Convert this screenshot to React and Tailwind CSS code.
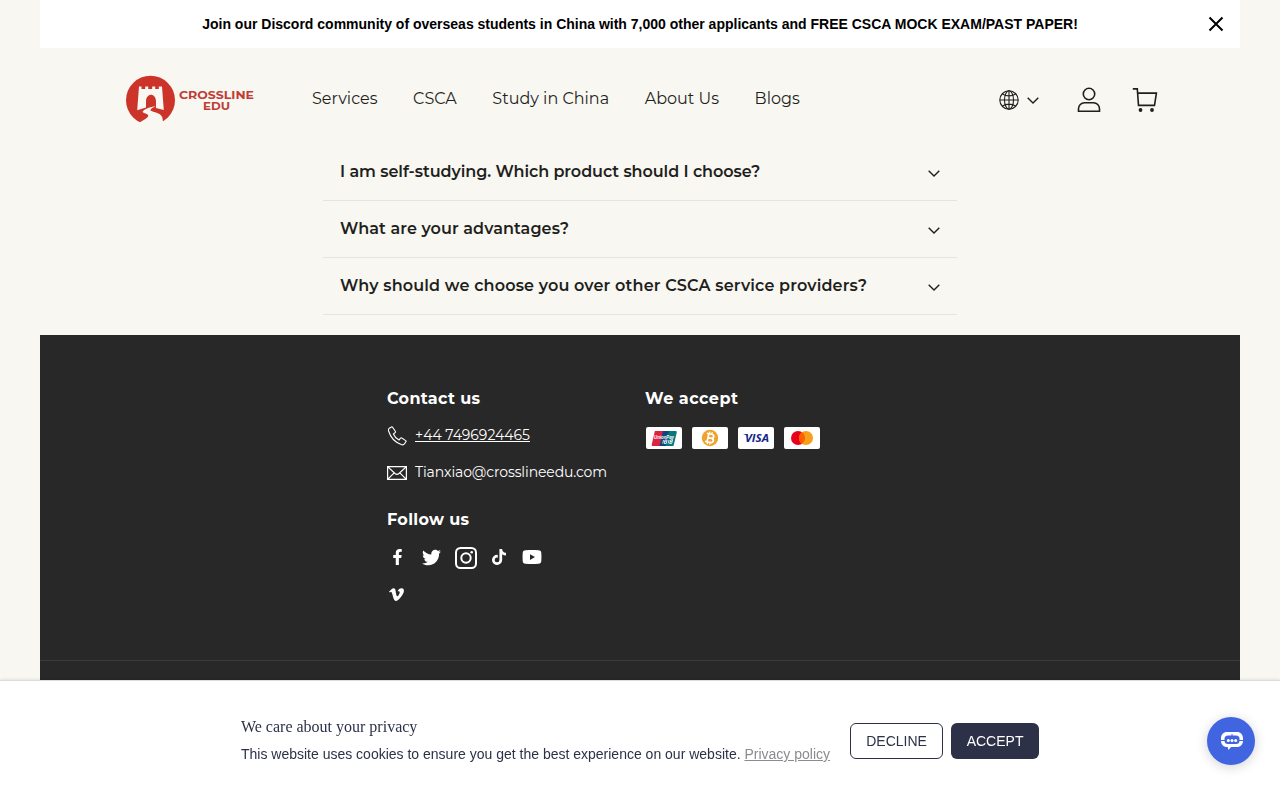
import { FaFacebookF, FaTwitter, FaTiktok, FaVimeoV } from 'react-icons/fa'

const navLinks = ['Services', 'CSCA', 'Study in China', 'About Us', 'Blogs']

const faqs = [
  { question: 'I am self-studying. Which product should I choose?', tracking: 'tracking-[-0.05px]' },
  { question: 'What are your advantages?', tracking: 'tracking-[0.09px]' },
  { question: 'Why should we choose you over other CSCA service providers?', tracking: 'tracking-[0.165px]' },
]

function Chevron({ className }) {
  return (
    <svg viewBox="0 0 12 7" className={className} fill="none" stroke="currentColor" strokeWidth="1.4">
      <path d="M.7.7 6 6 11.3.7" />
    </svg>
  )
}

function Logo() {
  return (
    <svg viewBox="0 0 130 50" className="mt-2 h-[50px] w-[130px]">
      <defs>
        <clipPath id="disc">
          <circle cx="25.5" cy="25.2" r="24.5" />
        </clipPath>
      </defs>
      <g clipPath="url(#disc)">
        <path d="M0 0h50v47H38.5L37 44.5 17 47H0Z" fill="#cc342a" />
        <path
          fill="#f8f7f1"
          d="M14 11.5h2.5v2.6h3.7v-2.6h3v2.6h4v-2.6h3v2.600h3.600v-2.600h3.200L38.800 35 31 33V26.500c0-9-10-9-10 0v6L12.200 35.200Z"
        />
        <path
          fill="#f8f7f1"
          d="M30.500 31.300c-5 .7-11.500 3-12.800 5.200-.8 1.600 4.300 2 5.300 3.500 1.300 2-3.500 4.800-9 7.500v3h22l1-3.500c2-4.500-.8-7.700-5.500-9.300-3.500-1.200-6.500-1.600-6-3 .5-1.500 3.500-2.400 5-3.400Z"
        />
      </g>
      <g fill="#bf3d35" fontSize="10.300" className="font-[Montserrat,sans-serif] font-bold">
        <text x="54" y="24" textLength="75" lengthAdjust="spacingAndGlyphs">CROSSLINE</text>
        <text x="78" y="34.600" textLength="27" lengthAdjust="spacingAndGlyphs">EDU</text>
      </g>
    </svg>
  )
}

function Header() {
  return (
    <header className="flex h-24 items-center pl-[85px] pr-[81px]">
      <Logo />
      <nav className="ml-[57px] mt-1.5 flex gap-[35.600px] text-base leading-6">
        {navLinks.map((label) => (
          <a key={label} href="#" className="block whitespace-nowrap">
            {label}
          </a>
        ))}
      </nav>
      <div className="ml-auto mt-1 flex items-center">
        <svg viewBox="0 0 20 20" className="mt-1 size-5" fill="none" stroke="currentColor" strokeWidth="1.1">
          <circle cx="10" cy="10" r="9.2" />
          <ellipse cx="10" cy="10" rx="4.5" ry="9.2" />
          <path d="M10 .8v18.400M.8 10h18.400M3.300 4c4 2.300 9.400 2.300 13.400 0M3.300 16c4-2.300 9.400-2.300 13.400 0" />
        </svg>
        <Chevron className="ml-2 mt-1 h-[7px] w-3" />
        <svg viewBox="0 0 24 26" className="ml-[38px] mt-1 h-[26px] w-6" fill="none" stroke="currentColor" strokeWidth="1.6">
          <circle cx="12" cy="7" r="5.7" />
          <path d="M1.500 24.200v-2.500a6 6 0 0 1 6-6h9a6 6 0 0 1 6 6v2.500Z" />
        </svg>
        <svg viewBox="0 0 26 24" className="ml-[31px] mr-px mt-1 h-6 w-[26px]" fill="none" stroke="currentColor" strokeWidth="1.6">
          <path d="M.8.9h4.500l1.200 16.500h16l1.900-12.300H5.600" />
          <circle cx="8.5" cy="22" r="1.9" fill="currentColor" stroke="none" />
          <circle cx="20" cy="22" r="1.9" fill="currentColor" stroke="none" />
        </svg>
      </div>
    </header>
  )
}

function Payments() {
  const card = 'h-[22px] w-9 rounded-[2px] bg-white'
  return (
    <div className="mt-4 flex gap-2.5 pl-px">
      <svg viewBox="0 0 36 22" className={card}>
        <path d="M9 4h9l-3.500 15H7c-1 0-1.500-.8-1.200-1.800L8.600 5c.1-.6.2-1 .4-1Z" fill="#dc233f" />
        <path d="M17 4h7l-3.500 15h-7Z" fill="#13457d" />
        <path d="M23 4h6.500c1 0 1.400.7 1.200 1.700L27.800 18c-.2.7-.6 1-1.200 1h-7Z" fill="#09767b" />
        <g fill="white" className="font-['Liberation_Sans',sans-serif] font-bold italic">
          <text x="8" y="11.5" fontSize="6" textLength="20" lengthAdjust="spacingAndGlyphs">UnionPay</text>
        </g>
        <path d="m17.500 13-.8 3.500M19 13h2l-.8 3.500h-2ZM18.500 14.700h2M23 13l-.8 3.500M24.500 13h2l-.8 3.500h-2ZM24 14.700h2" fill="none" stroke="white" strokeWidth=".8" />
      </svg>
      <svg viewBox="0 0 36 22" className={card}>
        <circle cx="18" cy="11" r="8.2" fill="#eda32f" />
        <g transform="rotate(12 18 11)" fill="none" stroke="white" strokeWidth="1.7">
          <path d="M14 7h4.800c3.400 0 3.400 4 0 4h-3H19c3.800 0 3.800 4.300 0 4.300h-5M16 7v8.300" />
          <path strokeWidth="1.2" d="M16.600 4.800V7M19 4.800V7M16.600 15.300v2.200M19 15.300v2.200" />
        </g>
      </svg>
      <svg viewBox="0 0 36 22" className={card}>
        <text
          x="7" y="15" fontSize="11" textLength="24" lengthAdjust="spacingAndGlyphs" fill="#142688"
          className="font-['Open_Sans',sans-serif] font-bold italic"
        >
          VISA
        </text>
        <path d="M5 7h4l1 3-2-2Z" fill="#142688" />
      </svg>
      <svg viewBox="0 0 36 22" className={card}>
        <circle cx="14" cy="11" r="7" fill="#eb001b" />
        <circle cx="22" cy="11" r="7" fill="#f79e1b" />
        <path d="M18 5.260a7 7 0 0 1 0 11.480 7 7 0 0 1 0-11.480Z" fill="#ff5f00" />
      </svg>
    </div>
  )
}

function Socials() {
  return (
    <div className="text-white">
      <div className="mt-[13px] flex h-6 items-center">
        <FaFacebookF className="mb-px ml-0.5 h-4 w-[17px]" />
        <FaTwitter className="ml-4 size-[19px]" />
        <svg viewBox="0 0 22 22" className="ml-[14px] mt-0.5 size-[22px]" fill="none" stroke="currentColor" strokeWidth="2">
          <rect x="1" y="1" width="20" height="20" rx="4.5" />
          <circle cx="11" cy="11" r="4.7" />
          <circle cx="16.7" cy="5.3" r="1.3" fill="currentColor" stroke="none" />
        </svg>
        <FaTiktok className="mb-px ml-[14px] size-4" />
        <svg viewBox="0 0 20 14" className="mb-px ml-[15px] h-[14px] w-5" fill="currentColor">
          <path fillRule="evenodd" d="M3.500.3C8 0 12 0 16.500.3c1.900.1 2.700 1 2.800 2.700.2 2.700.2 5.300 0 8-.1 1.700-.9 2.600-2.800 2.700-4.500.3-8.500.3-13 0C1.600 13.600.8 12.700.7 11c-.2-2.700-.2-5.300 0-8C.8 1.300 1.600.4 3.500.3Zm4.500 4v5.600L13 7Z" />
        </svg>
      </div>
      <div className="mt-[13px] flex h-6 items-center">
        <FaVimeoV className="ml-px size-[17px]" />
      </div>
    </div>
  )
}

function Footer() {
  return (
    <footer className="mt-5 h-[465px] bg-[#282828] text-white">
      <div className="flex h-[325px] pl-[347px] pt-[52px]">
        <div className="w-[258px]">
          <h3 className="text-base font-bold leading-6 tracking-[0.33px]">Contact us</h3>
          <p className="mt-[13px] flex h-[22px] items-center text-sm">
            <svg viewBox="0 0 20 20" className="mt-0.5 size-5" fill="none" stroke="currentColor" strokeWidth="1.1">
              <path d="M2.300 2.200 4.400 1c.4-.2.9-.1 1.200.3l2.700 4c.3.4.2 1-.2 1.300L6.400 8c1 2.400 3 4.600 5.600 6l1.500-1.800c.3-.4.9-.5 1.300-.2l3.900 2.600c.4.3.5.8.2 1.200l-1.500 2.100c-.6.8-1.600 1.100-2.600.8C8.600 16.800 3.700 12 1.600 5c-.3-1.100-.1-2.200.7-2.800Z" />
            </svg>
            <a href="#" className="ml-2 underline">+44 7496924465</a>
          </p>
          <p className="mt-[15px] flex h-[22px] items-center text-sm">
            <svg viewBox="0 0 20 14" className="mt-0.5 h-[14px] w-5" fill="none" stroke="currentColor" strokeWidth="1.2">
              <path d="M.6.6h18.800v12.800H.6ZM.6.6 8 7.500c1.300 1 2.700 1 4 0L19.400.6M.6 13.400l6.600-6.500M19.400 13.400l-6.600-6.500" />
            </svg>
            <span className="ml-2 tracking-[-0.12px]">Tianxiao@crosslineedu.com</span>
          </p>
          <h3 className="mt-[25px] text-base font-bold leading-6 tracking-[0.33px]">Follow us</h3>
          <Socials />
        </div>
        <div>
          <h3 className="text-base font-bold leading-6 tracking-[0.48px]">We accept</h3>
          <Payments />
        </div>
      </div>
      <div className="border-t border-[#3c3c3c]" />
    </footer>
  )
}

function CookieBar() {
  return (
    <div className="fixed inset-x-0 bottom-0 flex h-[120px] justify-center border-t border-[#dcdcdc] bg-white font-['Liberation_Sans',Arial,sans-serif] text-sm text-[#2d3148] shadow-[0_0_3px_rgba(0,0,0,0.15)]">
      <div className="pt-[35px]">
        <h2 className="font-['Liberation_Serif',serif] text-base leading-[22px]">We care about your privacy</h2>
        <p className="mt-1.5 leading-5">
          This website uses cookies to ensure you get the best experience on our website.{' '}
          <a href="#" className="text-[#8b8b90] underline">Privacy policy</a>
        </p>
      </div>
      <div className="ml-5 flex gap-2 pt-[42px]">
        <button className="h-9 w-[93px] rounded-md border border-[#2d3148]">DECLINE</button>
        <button className="h-9 w-[88px] rounded-md bg-[#2d3148] text-white">ACCEPT</button>
      </div>
    </div>
  )
}

function ChatButton() {
  return (
    <button className="fixed bottom-[35px] right-[25px] flex size-12 items-center justify-center rounded-full bg-[#4164e0] shadow-[0_2px_12px_rgba(0,0,0,0.18)]">
      <svg viewBox="0 0 24 20" className="ml-0.5 h-5 w-6">
        <path fill="white" d="M7 1h10c3.600 0 6 2.400 6 6.500v2c0 4-2.400 6.500-6 6.500h-6l-2.500 3-.8-3H7c-3.600 0-6-2.500-6-6.500v-2C1 3.400 3.400 1 7 1Z" />
        <rect x="4.5" y="4.5" width="15" height="8.5" rx="3.5" fill="#4164e0" />
        <path d="M0 9.500h5M19 9.500h5M12 3v2" stroke="#4164e0" />
        <g fill="white">
          <circle cx="8.3" cy="9.5" r="1.5" />
          <circle cx="12" cy="9.5" r="1.5" />
          <circle cx="15.7" cy="9.5" r="1.5" />
        </g>
      </svg>
    </button>
  )
}

export default function App() {
  return (
    <div className="h-screen overflow-hidden bg-[#f8f7f1] font-[Montserrat,Inter,sans-serif] text-[#1f1f1d]">
      <div className="mx-auto w-[1200px]">
        {/* Announcement */}
        <div className="flex h-12 items-center bg-white pr-4 text-black">
          <p className="flex-1 pl-8 text-center font-['Liberation_Sans',Arial,sans-serif] text-sm font-bold">
            Join our Discord community of overseas students in China with 7,000 other applicants and FREE CSCA MOCK EXAM/PAST PAPER!
          </p>
          <svg viewBox="0 0 16 16" className="size-4" stroke="currentColor" strokeWidth="2">
            <path d="m1.500 1.500 13 13M14.500 1.500l-13 13" />
          </svg>
        </div>

        <Header />

        {/* FAQ */}
        <section className="mx-auto w-[634px]">
          {faqs.map((faq) => (
            <div key={faq.question} className="flex h-[57px] items-center justify-between border-b border-[#e5e5e0] px-[17px]">
              <h4 className={`whitespace-nowrap text-base font-semibold leading-6 ${faq.tracking}`}>{faq.question}</h4>
              <Chevron className="mt-[3px] h-[7px] w-3" />
            </div>
          ))}
        </section>

        <Footer />
      </div>

      <CookieBar />
      <ChatButton />
    </div>
  )
}
